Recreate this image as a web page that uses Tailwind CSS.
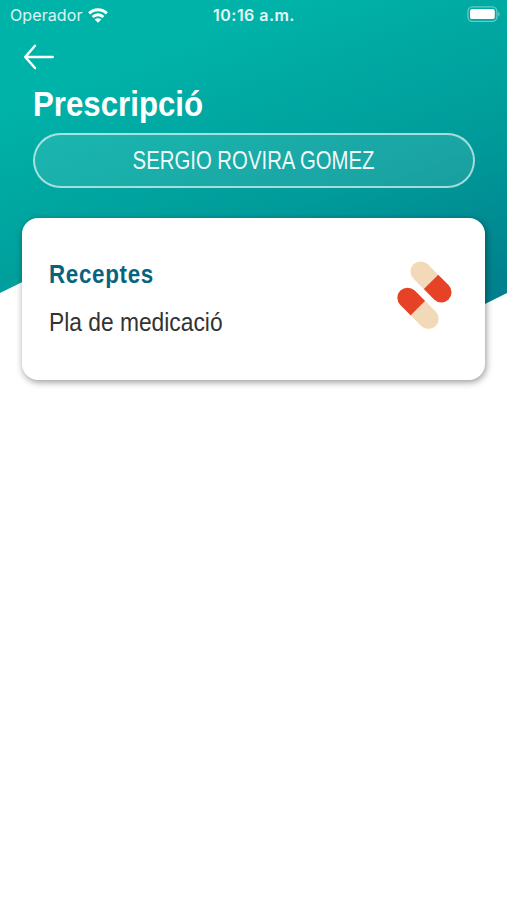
<!DOCTYPE html>
<html lang="ca">
<head>
  <meta charset="UTF-8" />
  <meta name="viewport" content="width=device-width, initial-scale=1.0" />
  <title>Prescripció</title>
  <script src="https://cdn.jsdelivr.net/npm/@tailwindcss/browser@4"></script>
</head>
<body class="relative min-h-screen overflow-x-hidden bg-white font-['Liberation_Sans',Arial,sans-serif]">

  <!-- Slanted header background -->
  <svg class="absolute inset-x-0 top-0 -z-10 h-[306px] w-full" viewBox="0 0 507 306" preserveAspectRatio="none">
    <defs>
      <linearGradient id="teal" gradientUnits="userSpaceOnUse" x1="180" y1="40" x2="316" y2="404">
        <stop offset="0" stop-color="#00b3a9" />
        <stop offset="0.5" stop-color="#009b9a" />
        <stop offset="1" stop-color="#007889" />
      </linearGradient>
    </defs>
    <path d="M0 0H507V293L481 306L120 234L0 293Z" fill="url(#teal)" />
  </svg>

  <!-- Status bar -->
  <div class="grid h-[30px] grid-cols-3 items-center pr-[7px] pl-[10px] font-['Inter',sans-serif] text-white">
    <div class="flex items-center gap-[5px]">
      <span class="text-[16px] leading-[30px] tracking-[0.1px] text-white/85">Operador</span>
      <svg class="h-[15px] w-5" viewBox="0 0 20 15" fill="none" stroke="#fff" stroke-width="3">
        <path d="M1.2 5.4C6.2 .5 13.8 .5 18.8 5.4" />
        <path d="M4.6 9C7.7 6 12.3 6 15.4 9" />
        <path d="M10 14.8L6.7 11.5C8.6 9.9 11.4 9.9 13.3 11.5Z" fill="#fff" stroke="none" />
      </svg>
    </div>
    <span class="-ml-[2px] text-center text-[16px] leading-[30px] font-semibold tracking-[0.45px] whitespace-nowrap text-white/90">10:16 a.m.</span>
    <svg class="-mt-[2px] h-4 w-[33px] justify-self-end" viewBox="0 0 33 16">
      <rect x=".9" y=".9" width="29" height="14.4" rx="4.5" fill="none" stroke="#fff" stroke-opacity=".4" stroke-width="1.3" />
      <rect x="3" y="3.1" width="24.8" height="10" rx="2.2" fill="#fff" />
      <path d="M31.3 5.5C33 6.5 33 9.5 31.3 10.5Z" fill="#fff" fill-opacity=".45" />
    </svg>
  </div>

  <header class="px-[33px] text-white">
    <svg class="-ml-[10px] h-[54px] w-8" viewBox="0 0 32 54" fill="none" stroke="#fff" stroke-width="2.5" stroke-linecap="round" stroke-linejoin="round">
      <path d="M29.7 27H2.2M12 15.8L2.2 27L12 38" />
    </svg>
    <h1 class="h-[50px] origin-left scale-x-[0.892] text-[35px] leading-[39px] font-bold whitespace-nowrap">Prescripció</h1>
    <div class="-mt-px -mr-px flex h-[55px] items-center justify-center rounded-full border-2 border-white/65 bg-white/10 bg-clip-padding">
      <span class="scale-x-[0.768] text-[26.5px] whitespace-nowrap text-white/95">SERGIO ROVIRA GOMEZ</span>
    </div>
  </header>

  <main class="px-[22px] pt-[30px]">
    <a href="#" class="flex h-[162px] items-center justify-between rounded-2xl bg-white pr-[29px] pl-7 shadow-[1px_2px_7px_rgba(0,0,0,0.42)]">
      <div class="-ml-px">
        <h2 class="origin-left scale-x-[0.86] text-[26px] leading-[47px] font-bold tracking-[0.8px] whitespace-nowrap text-[#08647e]">Receptes</h2>
        <p class="origin-left scale-x-[0.86] text-[26.5px] leading-[49px] whitespace-nowrap text-[#333]">Pla de medicació</p>
      </div>
      <svg class="mb-[7px] h-[74px] w-[62px]" viewBox="394 259 62 74">
        <g transform="translate(431 281.9) rotate(45)">
          <path d="M0 -10.2H-14.6A10.2 10.2 0 0 0 -14.6 10.2H0Z" fill="#f2d9b8" />
          <path d="M0 -10.2H14.6A10.2 10.2 0 0 1 14.6 10.2H0Z" fill="#e64225" />
        </g>
        <g transform="translate(418 308.3) rotate(45)">
          <path d="M0 -10.2H-14.8A10.2 10.2 0 0 0 -14.8 10.2H0Z" fill="#e64225" />
          <path d="M0 -10.2H14.8A10.2 10.2 0 0 1 14.8 10.2H0Z" fill="#f2d9b8" />
        </g>
      </svg>
    </a>
  </main>

</body>
</html>
